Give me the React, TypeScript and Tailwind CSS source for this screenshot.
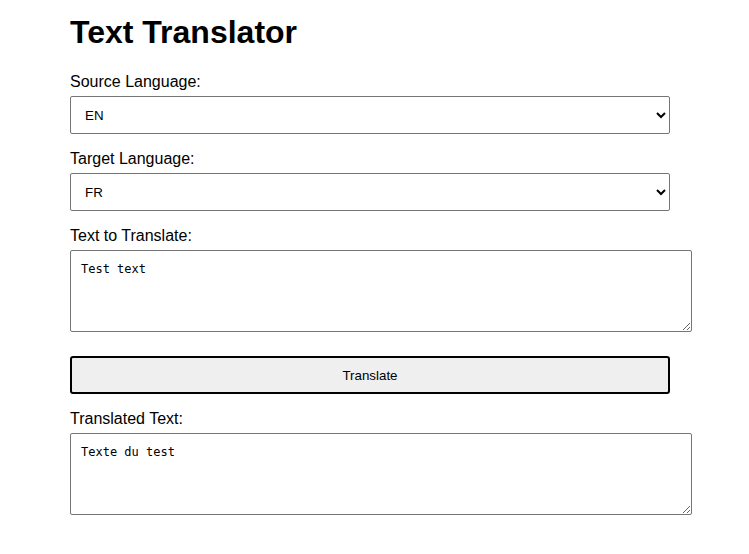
import React from "react";

export default function App() {
  const sans = { fontFamily: '"Liberation Sans", Arial, sans-serif' } as React.CSSProperties;
  return (
    <div className="min-h-[554px] w-full bg-white text-black" style={sans}>
      <div className="ml-[70px] w-[600px] pt-[14px]">
        <h1 className="m-0 text-[32px] font-bold leading-[37px] mb-[22px]">Text Translator</h1>

        <label className="block text-[16px] leading-[18px] mb-[5px]">Source Language:</label>
        <select
          defaultValue="en"
          className="block w-[600px] h-[38px] mb-[16px] px-[10px] border border-[#767676] rounded-[2px] bg-white text-[13.33px] text-black"
          style={{ fontFamily: '"Liberation Sans", Arial, sans-serif' }}
        >
          <option value="en">EN</option>
          <option value="fr">FR</option>
        </select>

        <label className="block text-[16px] leading-[18px] mb-[5px]">Target Language:</label>
        <select
          defaultValue="fr"
          className="block w-[600px] h-[38px] mb-[16px] px-[10px] border border-[#767676] rounded-[2px] bg-white text-[13.33px] text-black"
          style={{ fontFamily: '"Liberation Sans", Arial, sans-serif' }}
        >
          <option value="en">EN</option>
          <option value="fr">FR</option>
        </select>

        <label className="block text-[16px] leading-[18px] mb-[5px]">Text to Translate:</label>
        <textarea
          defaultValue="Test text"
          className="block w-[622px] h-[82px] px-[10px] pt-[11px] pb-[9px] border border-[#767676] rounded-[2px] bg-white text-[12px] leading-[15px] text-black mb-[24px]"
          style={{ fontFamily: '"DejaVu Sans Mono", monospace' }}
        />

        <button
          className="block w-[600px] h-[38px] mb-[16px] border-2 border-black rounded-[3px] bg-[#efefef] text-[13.33px] text-black pt-[1px]"
          style={{ fontFamily: '"Liberation Sans", Arial, sans-serif' }}
        >
          Translate
        </button>

        <label className="block text-[16px] leading-[18px] mb-[5px]">Translated Text:</label>
        <textarea
          readOnly
          defaultValue="Texte du test"
          className="block w-[622px] h-[82px] px-[10px] pt-[11px] pb-[9px] border border-[#767676] rounded-[2px] bg-white text-[12px] leading-[15px] text-black"
          style={{ fontFamily: '"DejaVu Sans Mono", monospace' }}
        />
      </div>
    </div>
  );
}
